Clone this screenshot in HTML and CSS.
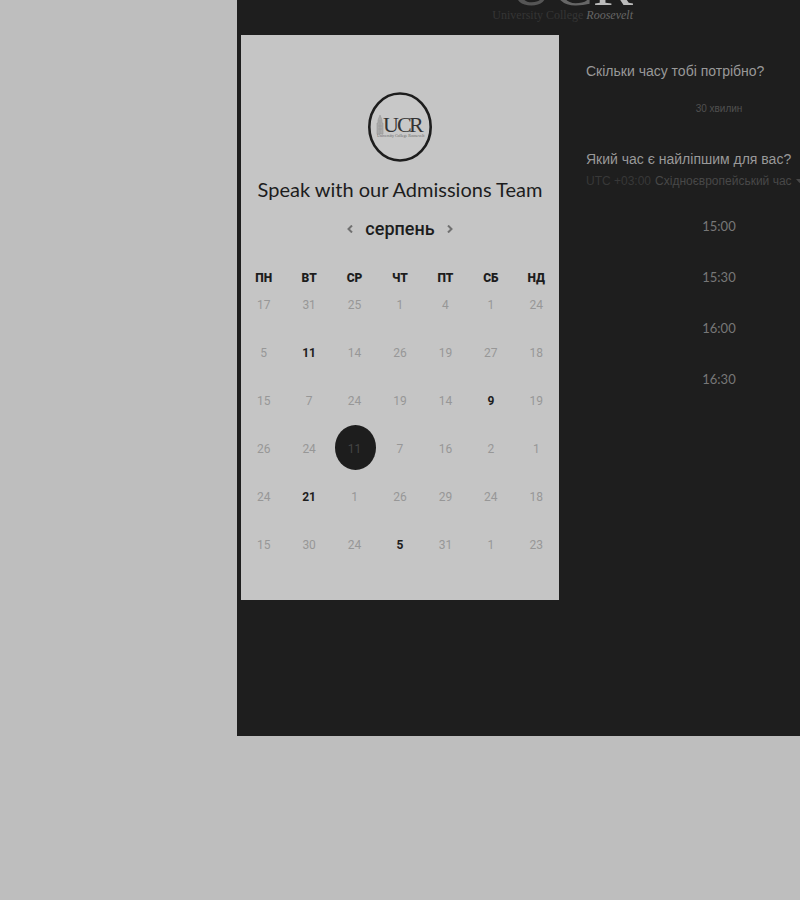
FILE: index.html
```html
<!DOCTYPE html>
<html lang="uk">
<head>
<meta charset="utf-8">
<meta name="viewport" content="width=device-width, initial-scale=1">
<title>Speak with our Admissions Team</title>
<link rel="stylesheet" href="styles.css">
</head>
<body>
<main class="scheduler">
  <header class="brand">
    <div class="brand-name"><span class="brand-u">U</span><span class="brand-c">C</span><span class="brand-r">R</span></div>
    <div class="brand-sub">University College <em>Roosevelt</em></div>
  </header>
  <div class="columns">
    <section class="card">
      <svg class="seal" viewBox="0 0 64 70" role="img" aria-label="UCR">
        <ellipse cx="32" cy="35" rx="30.7" ry="33.5" fill="#c8c8c8" stroke="#1d1d1d" stroke-width="2.6"/>
        <path d="M9 42V31h1v-3l2-5 2 5v3h1v11zM10 34h4M10 37h4M12 28v14" fill="#aaa" stroke="#999" stroke-width=".6"/>
        <text class="seal-name" y="40" fill="#333"><tspan x="15">U</tspan><tspan x="29">C</tspan><tspan x="41">R</tspan></text>
        <text class="seal-sub" x="9" y="45" fill="#666">University College Roosevelt</text>
      </svg>
      <h1 class="title">Speak with our Admissions Team</h1>
      <div class="month">
        <button class="arrow" type="button" aria-label="Попередній місяць"><svg viewBox="0 0 6 8"><path d="M5 .5 1.500 4 5 7.500"/></svg></button>
        <h2 class="month-name">серпень</h2>
        <button class="arrow" type="button" aria-label="Наступний місяць"><svg viewBox="0 0 6 8"><path d="M1 .5 4.500 4 1 7.500"/></svg></button>
      </div>
      <table class="calendar">
        <thead><tr><th>ПН</th><th>ВТ</th><th>СР</th><th>ЧТ</th><th>ПТ</th><th>СБ</th><th>НД</th></tr></thead>
        <tbody>
          <tr><td>17</td><td>31</td><td>25</td><td>1</td><td>4</td><td>1</td><td>24</td></tr>
          <tr><td>5</td><td><button class="day" type="button">11</button></td><td>14</td><td>26</td><td>19</td><td>27</td><td>18</td></tr>
          <tr><td>15</td><td>7</td><td>24</td><td>19</td><td>14</td><td><button class="day" type="button">9</button></td><td>19</td></tr>
          <tr><td>26</td><td>24</td><td><button class="day selected" type="button" aria-pressed="true">11</button></td><td>7</td><td>16</td><td>2</td><td>1</td></tr>
          <tr><td>24</td><td><button class="day" type="button">21</button></td><td>1</td><td>26</td><td>29</td><td>24</td><td>18</td></tr>
          <tr><td>15</td><td>30</td><td>24</td><td><button class="day" type="button">5</button></td><td>31</td><td>1</td><td>23</td></tr>
        </tbody>
      </table>
    </section>
    <section class="options">
      <h2 class="question">Скільки часу тобі потрібно?</h2>
      <button class="duration" type="button">30 хвилин</button>
      <h2 class="question">Який час є найліпшим для вас?</h2>
      <button class="zone" type="button" aria-haspopup="listbox"><span class="offset">UTC +03:00</span> Східноєвропейський час <svg class="caret" viewBox="0 0 7 5"><path d="M0 0h7L3.500 4z"/></svg></button>
      <div class="slots">
        <button class="slot" type="button">15:00</button>
        <button class="slot" type="button">15:30</button>
        <button class="slot" type="button">16:00</button>
        <button class="slot" type="button">16:30</button>
      </div>
    </section>
  </div>
</main>
</body>
</html>
```
FILE: styles.css
```css
* { box-sizing: border-box; }

body {
  margin: 0;
  background: #bebebe;
  color: #1d1d1d;
  font-family: Lato, "Liberation Sans", sans-serif;
}

button {
  margin: 0;
  padding: 0;
  border: 0;
  background: none;
  color: inherit;
  font: inherit;
  cursor: pointer;
}

h1, h2 { margin: 0; }

.scheduler {
  margin-left: 237px;
  padding: 0 0 136px 4px;
  background: #1e1e1e;
  overflow: hidden;
}

.brand {
  display: flex;
  flex-direction: column;
  justify-content: flex-end;
  width: 392px;
  height: 35px;
  padding-bottom: 14px;
  text-align: right;
  font-family: "Liberation Serif", serif;
  white-space: nowrap;
}

.brand-name {
  font-size: 60px;
  line-height: 48px;
}

.brand-u { color: #555; }
.brand-c { color: #666; }
.brand-r { color: #bbb; }

.brand-sub {
  color: #353535;
  font-size: 12px;
  line-height: 12px;
}

.brand-sub em { color: #666; }

.columns {
  display: flex;
  gap: 27px;
}

.card {
  flex: 0 0 318px;
  padding: 57px 0 17px;
  background: #c5c5c5;
  text-align: center;
}

.seal {
  display: block;
  width: 64px;
  height: 70px;
  margin: 0 auto;
}

.seal-name { font: 22px "Liberation Serif", serif; }
.seal-sub { font: 4px "Liberation Serif", serif; }

.title {
  margin-top: 12px;
  font-size: 20px;
  font-weight: 400;
  line-height: 30px;
  white-space: nowrap;
}

.month {
  display: flex;
  justify-content: center;
  align-items: center;
  gap: 12px;
  height: 24px;
  margin-top: 13px;
}

.month-name {
  font-family: Roboto, sans-serif;
  font-size: 18px;
  font-weight: 500;
  line-height: 24px;
}

.arrow { display: flex; }

.arrow svg {
  width: 6px;
  height: 8px;
  fill: none;
  stroke: #707070;
  stroke-width: 2;
}

.calendar {
  width: 100%;
  margin-top: 27px;
  border-collapse: collapse;
  table-layout: fixed;
  font-family: Roboto, sans-serif;
}

.calendar th {
  height: 27px;
  padding: 0;
  font-size: 12px;
  font-weight: 900;
  line-height: 20px;
  vertical-align: top;
}

.calendar td {
  height: 48px;
  padding: 0;
  color: #979797;
  font-size: 12px;
  line-height: 20px;
  vertical-align: top;
}

.day {
  position: relative;
  display: block;
  width: 100%;
  color: #1d1d1d;
  font-weight: 700;
}

.selected {
  z-index: 0;
  color: #444;
  font-weight: 400;
}

.selected::before {
  content: "";
  position: absolute;
  z-index: -1;
  inset: -14px 1px -11px 3px;
  border-radius: 50%;
  background: #1d1d1d;
}

.options {
  display: flex;
  flex-direction: column;
  flex: 0 0 266px;
  padding-top: 26px;
  font-family: "Liberation Sans", sans-serif;
}

.question {
  color: #999;
  font-size: 14px;
  font-weight: 400;
  line-height: 20px;
  white-space: nowrap;
}

.duration {
  height: 40px;
  margin: 7px 0 21px;
  color: #505050;
  font-size: 10px;
}

.zone {
  display: flex;
  align-items: center;
  gap: 4px;
  height: 24px;
  color: #484848;
  font-size: 12px;
  white-space: nowrap;
}

.offset { color: #383838; }

.caret {
  flex: none;
  width: 7px;
  height: 5px;
  fill: #484848;
}

.slots {
  display: flex;
  flex-direction: column;
  gap: 11px;
  margin-top: 13px;
}

.slot {
  height: 40px;
  color: #777;
  font-family: Lato, sans-serif;
  font-size: 13px;
}
```
